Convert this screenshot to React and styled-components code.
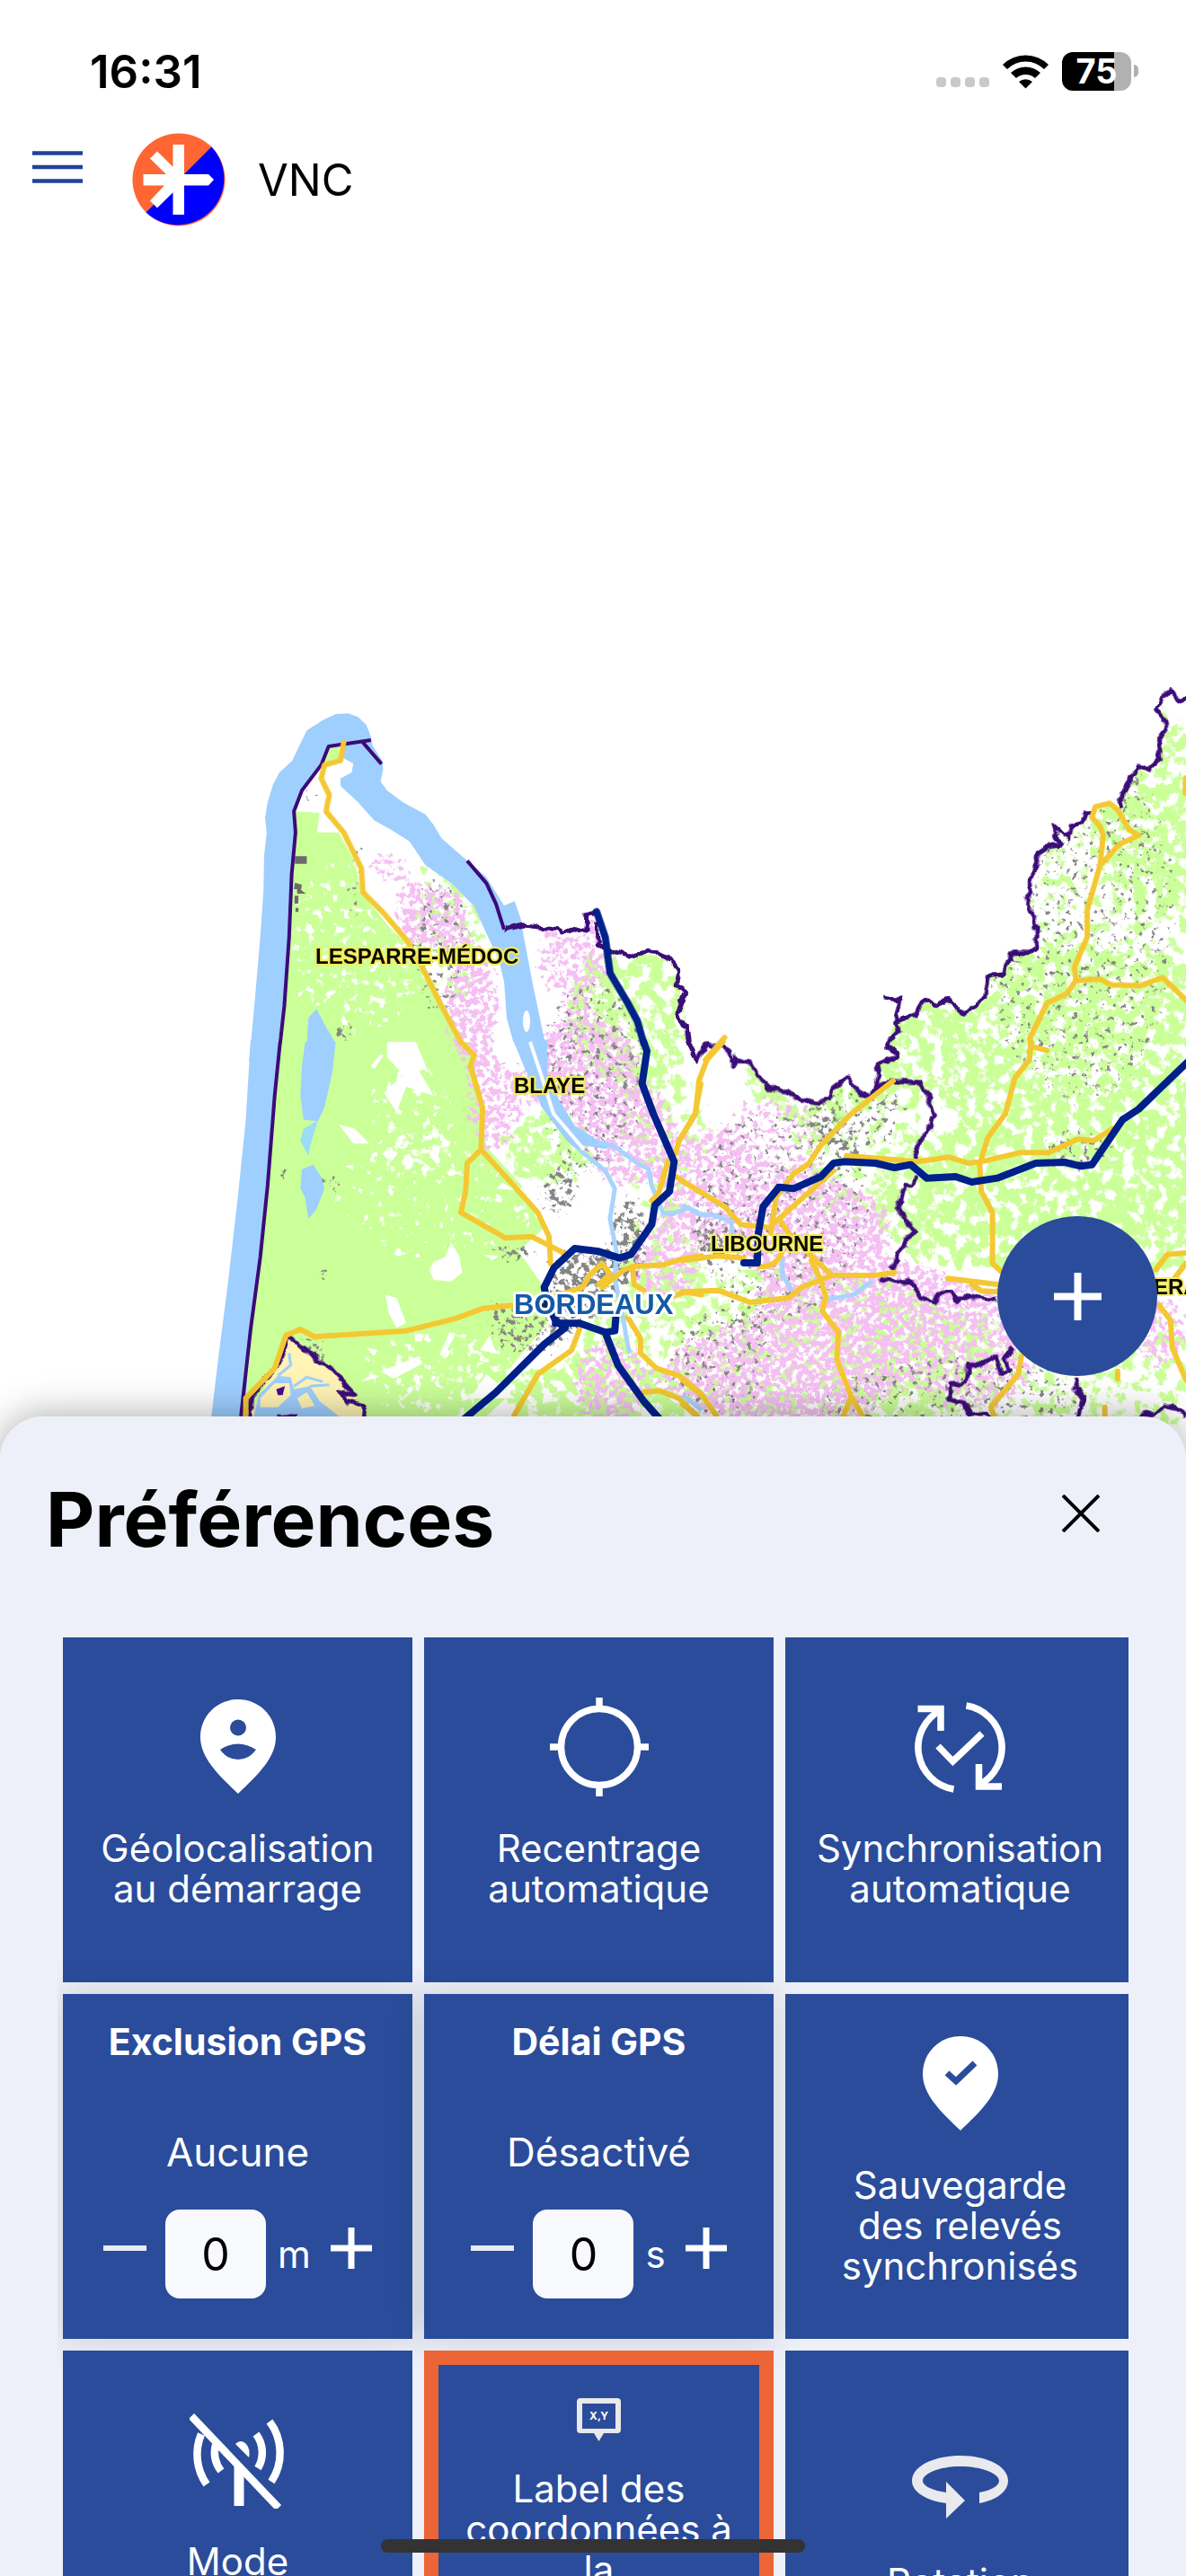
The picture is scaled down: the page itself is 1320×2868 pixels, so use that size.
import React, { useState } from 'react';
import styled, { createGlobalStyle } from 'styled-components';

const GlobalStyle = createGlobalStyle`
  * {
    box-sizing: border-box;
  }
  body {
    margin: 0;
    background: #fff;
    font-family: Inter, "Liberation Sans", sans-serif;
    color: #000;
  }
  button {
    border: none;
    padding: 0;
    background: none;
    font: inherit;
    color: inherit;
    cursor: pointer;
  }
  svg {
    display: block;
  }
`

const Screen = styled.div`
  position: relative;
  display: flex;
  flex-direction: column;
  height: 100vh;
  overflow: hidden;
`
const Upper = styled.div`
  display: flex;
  flex-direction: column;
  flex: none;
  height: 55vh;
`
const StatusBar = styled.div`
  display: flex;
  justify-content: space-between;
  align-items: center;
  flex: none;
  height: 138px;
  padding: 20px 53px 0 100px;
`
const Clock = styled.span`
  font-size: 51px;
  font-weight: 600;
`
const StatusIcons = styled.div`
  display: flex;
  align-items: center;
  gap: 15px;
`
const Signal = styled.div`
  display: flex;
  gap: 5px;
  padding-top: 24px;
`
const SignalDot = styled.span`
  width: 11px;
  height: 11px;
  border-radius: 4px;
  background: #c9c9c9;
`
const Battery = styled.div`
  display: flex;
  align-items: center;
  gap: 3px;
`
const BatteryBody = styled.div`
  width: 77px;
  height: 43px;
  border-radius: 12px;
  background: linear-gradient(to right, #000 75%, #b1b1b1 75%);
  color: #fff;
  font-size: 38px;
  font-weight: 700;
  line-height: 43px;
  text-align: center;
`
const BatteryTip = styled.span`
  width: 5px;
  height: 14px;
  border-radius: 0 6px 6px 0;
  background: #b1b1b1;
`
const AppBar = styled.header`
  display: flex;
  align-items: center;
  flex: none;
  height: 124px;
  padding: 0 36px;
`
const MenuButton = styled.button`
  align-self: flex-start;
  padding-top: 30px;
  margin-right: 55px;
`
const AppName = styled.span`
  margin-left: 36px;
  font-size: 49px;
`
const MapArea = styled.main`
  position: relative;
  flex: 1;
  min-height: 0;
  margin-bottom: -48px;
  overflow: hidden;
`
const MapSvg = styled.svg`
  width: 100%;
`
const MapLabel = styled.text`
  font-family: "Liberation Sans", Arial, sans-serif;
  font-weight: 700;
  font-size: ${props => (props.$city ? 31 : 24)}px;
  fill: ${props => (props.$city ? '#1459a8' : '#0a0a00')};
  stroke: ${props => (props.$city ? '#ffffff' : '#f4ec5c')};
  stroke-width: ${props => (props.$city ? 6 : 4)}px;
  stroke-linejoin: round;
  paint-order: stroke;
`
const AddButton = styled.button`
  position: absolute;
  right: 32px;
  bottom: 93px;
  display: flex;
  justify-content: center;
  align-items: center;
  width: 178px;
  height: 178px;
  border-radius: 50%;
  background: #2a4c9b;
`
const SheetShadow = styled.div`
  position: relative;
  display: flex;
  flex-direction: column;
  flex: 1;
  min-height: 0;
  border-radius: 48px 48px 0 0;
  box-shadow: 0 0 44px rgba(0, 0, 0, 0.35);
`
const Sheet = styled.section`
  flex: 1;
  min-height: 0;
  overflow: hidden;
  border-radius: 48px 48px 0 0;
  background: #edf0f8;
`
const SheetHeader = styled.div`
  display: flex;
  justify-content: space-between;
  align-items: center;
  padding: 65px 96px 0 51px;
`
const Title = styled.h1`
  margin: 0;
  font-size: 84px;
  line-height: 100px;
  font-weight: 700;
`
const CloseButton = styled.button`
  padding-bottom: 14px;
`
const TilesViewport = styled.div`
  margin: 0 64px;
  padding-top: 81px;
  overflow: hidden;
`
const Tiles = styled.div`
  display: grid;
  grid-template-columns: repeat(3, 1fr);
  grid-auto-rows: 384px;
  gap: 13px;
  margin: 0 -7px 0 6px;
`
const Tile = styled.button`
  display: flex;
  flex-direction: column;
  justify-content: center;
  align-items: center;
  gap: 30px;
  padding-bottom: 20px;
  border: ${props => (props.$active ? '16px solid #ec6537' : 'none')};
  background: #2a4c9b;
  color: #fff;
`
const TileIcon = styled.span`
  display: flex;
  justify-content: center;
  align-items: center;
  height: ${props => (props.$small ? 48 : 120)}px;
`
const TileLabel = styled.span`
  min-height: ${props => props.$lines * 45}px;
  font-size: 42px;
  line-height: 45px;
  text-align: center;
`
const NumberTile = styled.div`
  display: flex;
  flex-direction: column;
  align-items: center;
  padding-top: 29px;
  background: #2a4c9b;
  color: #fff;
  box-shadow: 0 0 40px rgba(0, 0, 0, 0.14);
`
const NumberTitle = styled.label`
  margin-bottom: 77px;
  font-size: 41px;
  line-height: 48px;
  font-weight: 700;
`
const NumberState = styled.span`
  margin-bottom: 41px;
  font-size: 44px;
  line-height: 45px;
`
const Stepper = styled.div`
  display: flex;
  align-items: center;
`
const StepButton = styled.button`
  padding-bottom: 14px;
`
const NumberInput = styled.input`
  width: 112px;
  height: 99px;
  margin: 0 13px 0 21px;
  padding: 0;
  border: none;
  border-radius: 16px;
  background: #f8f9fd;
  color: #000;
  font-family: inherit;
  font-size: 50px;
  text-align: center;
`
const Unit = styled.span`
  margin-right: 22px;
  font-size: 42px;
  line-height: 45px;
`
const HomeIndicator = styled.div`
  position: absolute;
  left: 50%;
  bottom: 26px;
  width: 472px;
  height: 15px;
  margin-left: -236px;
  border-radius: 8px;
  background: #333;
`

const WifiIcon = () => (
  <svg width="51" height="40" viewBox="0 0 51 40" aria-hidden="true">
    <path d="M0 13 A36 36 0 0 1 51 13 L46 18 A29 29 0 0 0 5 18 Z" />
    <path d="M9 22 A24 24 0 0 1 42 22 L36 28 A16 16 0 0 0 15 28 Z" />
    <path d="M18 32 A12 12 0 0 1 33 32 L25.500 39.500 Z" />
  </svg>
)

const MenuIcon = () => (
  <svg width="56" height="36" viewBox="0 0 56 36" aria-hidden="true">
    <path d="M0 2.500 H56 M0 18 H56 M0 33.500 H56" stroke="#1f4396" strokeWidth="4.500" />
  </svg>
)

const Logo = () => (
  <svg width="104" height="104" viewBox="0 0 104 104" role="img" aria-label="VNC">
    <circle cx="52" cy="52" r="51.500" fill="#ff6633" />
    <path d="M88.400 15.600 A51.500 51.500 0 0 1 15.600 88.400 Z" fill="#0000ff" />
    <g fill="#fff">
      <path d="M45.500 13 H58 V91 H45.500 Z" />
      <path d="M12.500 46 H85 L91 52 L85 58.500 H12.500 Z" />
      <path d="M28 20.500 L20 28.500 L43 51 L20 75.500 L28 83.500 L54 58 V46 Z" />
    </g>
  </svg>
)

const GeolocIcon = () => (
  <svg width="84" height="106" viewBox="0 0 84 106">
    <path d="M42 0 C19 0 0 18 0 42 C0 65 20 84 42 105 C64 84 84 65 84 42 C84 18 65 0 42 0 Z" fill="#fff" />
    <circle cx="42" cy="31.500" r="9" fill="#2a4c9b" />
    <path d="M22 56 Q42 43 62 56 Q54 67 42 67 Q30 67 22 56 Z" fill="#2a4c9b" />
  </svg>
)

const TargetIcon = () => (
  <svg width="110" height="110" viewBox="0 0 110 110" fill="none" stroke="#fff" strokeWidth="7.500">
    <circle cx="55" cy="55" r="42.500" />
    <path d="M55 0 V10 M55 100 V110 M0 55 H10 M100 55 H110" />
  </svg>
)

const SyncIcon = () => (
  <svg width="101" height="101" viewBox="0 0 101 101" fill="none" stroke="#fff" strokeWidth="7.500">
    <path d="M57.500 4 A47 47 0 0 1 72 92" />
    <path d="M71.500 69 V94 H97" />
    <path d="M43.500 97 A47 47 0 0 1 29 9" />
    <path d="M3.500 7.500 H29 V32" />
    <path d="M26 49 L42.500 66 L75 35" />
  </svg>
)

const PinCheckIcon = () => (
  <svg width="84" height="106" viewBox="0 0 84 106">
    <path d="M42 0 C19 0 0 18 0 42 C0 65 20 84 42 105 C64 84 84 65 84 42 C84 18 65 0 42 0 Z" fill="#fff" />
    <path d="M27 41 L37 50 L58 30" fill="none" stroke="#2a4c9b" strokeWidth="7" />
  </svg>
)

const AntennaOffIcon = () => (
  <svg width="108" height="108" viewBox="-1 -7 108 108" fill="none" stroke="#fff" strokeWidth="8.500">
    <path d="M88 4 A58 58 0 0 1 90 71" />
    <path d="M73 18 A34 34 0 0 1 75 56" />
    <path d="M12 18 A58 58 0 0 0 18 74" />
    <path d="M28 30 A34 34 0 0 0 34 59" />
    <path d="M50 29 Q56 23 62 29 Q67 35 65 44 Z" fill="#fff" stroke="none" />
    <path d="M54 54 V98" strokeWidth="11" />
    <path d="M1 -2 L98 100" />
  </svg>
)

const CoordsIcon = () => (
  <svg width="49" height="48" viewBox="0 0 49 48">
    <path d="M4 0 H45 Q49 0 49 4 V35 Q49 39 45 39 H30 L24.500 48 L19 39 H4 Q0 39 0 35 V4 Q0 0 4 0 Z M6 6 V34 H43 V6 Z" fill="#e9e9ea" fillRule="evenodd" />
    <text x="24.500" y="24" fontSize="12" fontWeight="700" fill="#fff" textAnchor="middle">X,Y</text>
  </svg>
)

const RotateIcon = () => (
  <svg width="107" height="84" viewBox="0 -14 107 84">
    <path d="M38 53 C15 50 0 40 0 28 C0 12 24 0 54 0 C84 0 107 12 107 28 C107 41 92 50 75 53 V41 C87 39 97 34 97 28 C97 20 78 12 54 12 C30 12 12 20 12 28 C12 34 24 39 38 41 V29 L59 50 L38 70 Z" fill="#e9eaee" />
  </svg>
)

const PlusIcon = ({ size, weight }) => (
  <svg width={size} height={size} viewBox={`0 0 ${size} ${size}`} aria-hidden="true">
    <path d={`M0 ${size / 2} H${size} M${size / 2} 0 V${size}`} stroke="#fff" strokeWidth={weight} />
  </svg>
)

const MinusIcon = () => (
  <svg width="48" height="48" viewBox="0 0 48 48" aria-hidden="true">
    <path d="M0 24 H48" stroke="#e9ecf5" strokeWidth="6" />
  </svg>
)

const CloseIcon = () => (
  <svg width="42" height="42" viewBox="0 0 42 42" aria-hidden="true">
    <path d="M1 1 L41 41 M41 1 L1 41" stroke="#000" strokeWidth="4" />
  </svg>
)

// The map is drawn as four sheets; each has its own origin, all share one scale.
const sheets = {
  nw: 'translate(220 760) scale(0.35714 0.33333)',
  ne: 'translate(760 740) scale(0.35714 0.33333)',
  sw: 'translate(220 1160) scale(0.35714 0.33333)',
  se: 'translate(760 1160) scale(0.35714 0.33333)',
}

const sea = {
  nw: 'M160 1265 L175 1100 L195 850 L205 700 L207 580 L215 500 L210 450 L218 400 L235 340 L255 300 L295 260 L315 215 L340 160 L390 125 L430 105 L470 103 L500 115 L525 140 L540 180 L545 210 L575 260 L578 290 L570 330 L590 360 L640 400 L710 440 L735 475 L760 520 L840 595 L900 650 L955 745 L988 730 L1010 800 L1025 850 L1045 1000 L1075 1130 L1095 1265 Z',
  sw: 'M165 -5 L150 260 L125 520 L95 800 L65 1050 L35 1320 H400 V-5 Z',
}

const land = {
  nw: 'M250 1205 L270 1080 L285 850 L293 640 L295 570 L305 500 L300 430 L325 360 L385 275 L405 215 L440 210 L455 200 L450 250 L485 270 L480 300 L445 320 L445 345 L500 400 L550 460 L600 490 L660 530 L710 610 L790 670 L860 745 L905 850 L940 930 L955 1000 L963 1120 L985 1205 Z M1083 1205 L1045 1010 L1020 870 L1010 812 L1130 830 L1210 825 L1215 770 L1240 765 L1250 880 L1345 915 L1410 893 L1480 930 L1500 960 L1490 1010 L1520 1030 L1495 1105 L1525 1160 L1535 1205 Z',
  ne: 'M1570 105 L1540 120 L1525 80 L1495 115 L1475 150 L1500 180 L1503 220 L1480 270 L1485 315 L1455 345 L1420 345 L1370 430 L1365 478 L1330 463 L1275 500 L1245 525 L1210 540 L1203 580 L1160 540 L1155 575 L1182 600 L1145 605 L1110 630 L1090 700 L1070 780 L1100 870 L1102 940 L1075 965 L1020 965 L995 1035 L950 1040 L940 1110 L880 1168 L820 1118 L780 1138 L755 1118 L720 1170 L660 1195 L632 1275 L632 1265 H1570 Z M-2 1100 L15 1215 L25 1265 H-2 Z M60 1265 H105 Z',
  sw: 'M255 0 L240 180 L218 480 L195 720 L165 960 L135 1450 H1515 V0 Z',
  se: 'M-5 0 L18 0 L40 65 L75 5 L120 15 L145 40 L155 80 L165 55 L210 70 L245 130 L270 155 L295 155 L350 185 L420 205 L455 190 L460 165 L510 122 L560 175 L590 180 L610 120 L605 75 L675 45 L630 10 V0 H1575 V1450 H-5 Z',
}

const forest = {
  nw: 'M250 1205 L270 1080 L285 850 L293 640 L295 570 L305 500 L300 430 L380 435 L372 500 L440 500 L490 600 L510 700 L600 820 L660 880 L720 1000 L800 1150 L830 1205 Z M405 215 L440 215 L440 255 L395 270 Z',
  sw: 'M255 0 L240 180 L218 480 L195 720 L165 960 L135 1450 H840 L980 1080 L1090 940 L1080 820 L1000 700 L1080 620 L1010 480 L900 350 L885 200 L850 0 Z',
}

const clearings = 'M440 275 L490 290 L535 340 L485 340 Z M590 0 L680 0 L715 90 L690 95 L735 180 L650 150 L620 235 L580 170 L640 110 L590 50 Z M735 735 L770 720 L790 670 L815 715 L825 770 L790 800 L735 795 L722 760 Z M585 845 L620 855 L650 940 L620 955 L595 905 Z M540 80 L570 40 L580 45 L550 90 Z M775 435 L800 425 L810 440 L785 450 Z M675 975 L700 975 L700 1000 L678 1000 Z M760 1030 L785 970 L805 975 L770 1045 Z M570 1100 L690 1050 L700 1075 L610 1125 Z M880 1030 L910 980 L930 1040 Z M525 1020 L560 1030 L550 1050 Z M890 710 L940 715 L920 730 Z M930 490 L950 470 L990 495 Z M460 415 L485 410 L485 430 Z M850 1190 L990 1190 L900 1110 Z M1000 1160 L1050 1190 L1040 1210 Z M900 1250 L960 1190 L990 1250 Z'

const water = {
  nw: 'M340 1205 L345 1120 L370 1090 L400 1150 L430 1205 Z',
  sw: 'M335 0 H430 L420 100 L395 220 L375 265 L330 260 L320 180 L325 80 Z M325 425 L360 410 L385 450 L395 490 L370 560 L345 590 L335 520 L320 490 Z M983 -5 H1090 L1090 110 L1130 200 L1175 280 L1250 330 L1300 340 L1270 358 L1200 345 L1215 390 L1150 330 L1070 215 L1055 170 L1020 90 Z',
}

const rivers = {
  sw: 'M1190 360 L1270 430 L1300 490 L1285 590 L1305 700 L1300 790 L1325 920 L1345 1040 M1250 335 L1300 350 L1370 405 L1405 425 L1415 480 L1450 570 L1475 575 L1530 555 L1560 570',
  se: 'M0 545 L50 575 L100 580 L150 600 L155 640 M310 720 L310 780 L340 830 M450 860 L530 845 L590 800 M0 1180 L60 1230',
}

const roads = {
  nw: 'M455 200 L445 260 L395 275 L385 320 L410 375 L400 430 L455 500 L510 620 L515 700 L580 770 L655 865 L700 950 L760 1080 L820 1200',
  ne: 'M1085 1265 L1080 1250 L1135 1130 L1195 1100 L1225 1055 L1220 1010 L1260 910 L1260 820 L1300 670 L1310 570 L1300 540 L1275 510 L1285 475 L1330 463 L1355 485 L1390 550 L1420 570 L1360 600 L1305 665 M1225 1055 L1300 1050 L1335 1070 L1425 1072 L1495 1045 L1568 1120 M1566 380 V430 M70 1320 L130 1245',
  sw: 'M820 0 L862 45 L850 80 L888 220 L883 360 L840 405 L835 500 L820 570 L960 655 L1040 650 L1150 710 M883 360 L960 450 L1060 570 L1095 650 L1100 740 M150 1250 V1190 L240 1090 L275 980 L320 960 L365 985 L650 965 L800 925 L890 890 L980 880 M1190 960 L1165 1030 L1060 1110 L985 1250 M1270 980 L1290 1040 M1340 920 L1380 990 L1380 1040 L1430 1090 L1500 1115 L1570 1175 M1390 1170 L1440 1165 L1500 1190 L1555 1250 M1260 820 L1330 760 L1360 750 L1450 745 L1510 725 L1570 715 M1110 850 L1200 820 L1220 780 L1260 740 L1285 775 L1250 810 M1355 750 L1360 810 L1390 830 M1480 850 L1520 835 L1570 845 M1568 140 L1550 240 L1500 330 L1490 370 M1465 400 L1435 510 L1415 530 M1490 450 L1570 505',
  se: 'M125 0 L75 60 L50 130 L40 240 L0 310 M655 130 L520 245 L430 345 L390 410 L345 440 L290 520 L275 640 M470 430 L300 590 L330 640 L420 735 L465 780 L600 780 L660 770 M0 465 L130 550 L180 610 L270 620 L300 590 M0 730 L110 715 L190 722 M310 700 Q290 755 240 750 M0 835 L110 830 L210 870 L330 855 L370 820 L465 780 M400 730 L430 795 L445 850 L435 900 L485 970 L480 1060 L525 1185 L500 1250 M525 1185 L560 1250 M0 1130 L60 1180 L105 1250 M0 1210 L45 1250 M510 380 L730 400 L830 385 L890 405 L930 400 L1050 370 L1140 370 L1230 325 L1280 330 L1340 290 M1085 0 L1080 60 L1035 120 L1005 240 L950 320 L925 410 L930 500 L965 570 L965 740 L990 765 M1085 15 L1135 28 M825 790 L980 810 M900 810 L930 832 L980 835 M1055 1050 L1045 1110 L960 1220 L970 1250 M1475 760 L1510 710 L1568 705 M1535 785 L1568 740 M1485 880 L1520 930 L1525 1020 L1568 1130 M1355 1100 V1125 M1315 1220 V1250',
}

const motorways = {
  nw: 'M1243 765 L1270 850 L1285 970 L1340 1070 L1370 1130 L1390 1205',
  sw: 'M1390 0 L1400 30 L1385 140 L1420 240 L1485 400 L1470 500 L1425 545 L1415 610 L1350 710 L1315 722 L1250 700 L1175 690 L1110 755 L1080 820 L1090 870 L1115 930 L1145 955 L1080 1010 L930 1170 L830 1260 M1115 940 L1190 940 L1270 970 L1300 965 L1303 920 M1270 970 L1310 1080 L1390 1200 L1440 1260',
  se: 'M190 738 L232 738 L235 640 L250 550 L300 485 L345 490 L430 450 L470 405 L500 400 L600 405 L660 420 L710 410 L760 455 L850 450 L900 468 L980 455 L1100 405 L1190 402 L1240 415 L1275 410 L1370 260 L1420 225 L1570 70',
}

const coast = {
  nw: 'M257 1205 L270 1080 L285 850 L293 640 L305 500 L300 430 L325 360 L385 275 L408 213 L540 192 M515 200 L573 272 M840 595 L900 670 L930 740 L955 825',
  sw: 'M257 0 L240 180 L218 480 L195 720 L165 960 L135 1250',
}

const borders = {
  nw: 'M955 825 L1020 810 L1130 825 L1135 840 L1180 820 L1212 828 L1215 772 L1243 765 M1245 800 L1250 880 L1345 915 L1410 893 L1480 930 L1500 960 L1490 1010 L1520 1030 L1495 1105 L1525 1160 L1530 1200 L1552 1265',
  ne: 'M625 1110 L675 1120 L660 1195 L720 1170 L755 1118 L780 1138 L820 1118 L880 1168 L940 1110 L950 1040 L995 1035 L1020 965 L1075 965 L1102 940 L1100 870 L1070 780 L1090 700 L1110 630 L1145 605 L1182 600 L1155 575 L1160 540 L1203 580 L1210 540 L1245 525 L1255 500 L1275 500 M1365 478 L1370 430 L1420 345 L1455 345 L1485 315 L1480 270 L1503 220 L1500 180 L1475 150 L1495 115 L1525 80 L1540 120 L1568 105 M665 1195 L670 1225 L632 1275 L675 1305',
  sw: 'M165 1250 V1190 L240 1090 L270 1030 L285 985 L350 1045 L410 1085 L490 1180 L440 1170 L460 1200 L510 1215 L525 1260 M250 1255 Q285 1245 310 1255',
  se: 'M18 0 L40 65 L75 5 L120 15 L145 40 L155 80 L165 55 L210 70 L245 130 L270 155 L295 155 L350 185 L420 205 L455 190 L460 165 L510 122 L560 175 L590 180 L620 140 L655 128 L735 135 L765 180 L785 250 L735 340 L720 400 M725 440 L715 480 L690 475 L670 555 L720 630 L670 710 L650 760 M590 180 L610 120 L605 75 L675 45 M610 787 L670 803 L705 797 L740 855 L785 870 L800 840 L835 835 L850 865 L880 850 L980 862 M1028 1015 L1005 1060 L1020 1100 L990 1105 L972 1045 L935 1080 L890 1075 L880 1140 L835 1140 V1195 L880 1210 L890 1245 L940 1240 L970 1260 M1230 1120 L1220 1155 L1248 1185 L1232 1260 M1425 1245 L1470 1240 L1500 1215 L1540 1225 L1568 1245',
}

// cx, cy, rx, ry, density
const meadows = [
  [1170, 1150, 250, 100, 1], [1210, 1320, 200, 120, 1], [1290, 900, 70, 120, 0.97],
  [1220, 1000, 170, 130, 0.84], [900, 1200, 80, 50, 1], [950, 1280, 90, 90, 0.85],
  [700, 1130, 80, 90, 0.97], [1060, 1340, 90, 80, 0.97], [860, 1510, 240, 110, 0.9],
  [1160, 1530, 220, 90, 0.88], [500, 1030, 50, 100, 0.88], [610, 1280, 60, 50, 1],
  [640, 1560, 120, 50, 1], [740, 1270, 60, 90, 0.86], [730, 1400, 60, 60, 0.85],
]
const vineyards = [
  [480, 1020, 50, 45, 1], [525, 1120, 38, 80, 1], [430, 965, 35, 25, 0.92], [550, 1230, 40, 60, 0.97],
  [650, 1190, 70, 70, 1], [700, 1260, 60, 70, 0.98], [640, 1065, 50, 60, 0.95], [900, 1370, 100, 70, 1],
  [790, 1320, 60, 70, 0.96], [960, 1450, 130, 60, 1], [870, 1530, 140, 70, 1], [680, 1540, 50, 60, 0.97],
  [740, 1400, 50, 60, 0.95], [860, 1270, 70, 60, 0.88], [1080, 1500, 90, 80, 0.95], [1290, 1480, 40, 50, 0.95],
]
const towns = [
  [645, 1430, 46, 50, 1], [645, 1430, 30, 34, 1], [570, 1395, 36, 18, 1], [700, 1380, 30, 60, 0.96], [590, 1480, 56, 40, 0.92],
  [345, 1500, 24, 22, 1], [372, 1540, 26, 26, 1], [545, 1450, 16, 12, 1], [315, 1308, 18, 16, 1],
  [368, 1318, 24, 16, 1], [345, 885, 14, 20, 1], [395, 980, 20, 60, 0.86], [490, 1050, 40, 90, 0.84],
  [660, 1200, 70, 120, 0.84], [870, 1350, 110, 130, 0.82], [1200, 1020, 120, 220, 0.82], [800, 1520, 70, 70, 0.83],
  [380, 1148, 24, 18, 1], [294, 1448, 6, 16, 1], [360, 1420, 16, 22, 1], [620, 1330, 30, 34, 0.95],
  [1060, 1560, 160, 60, 0.83], [790, 1385, 24, 28, 0.94], [960, 1240, 60, 50, 0.86], [1200, 1280, 50, 34, 0.88],
]
const glades = [
  [400, 1050, 90, 110, 0.84], [460, 1240, 60, 70, 0.82], [480, 1340, 120, 80, 0.78], [500, 1530, 110, 60, 0.86],
  [640, 1340, 60, 60, 0.9], [1100, 1190, 260, 60, 0.8],
]

const Layer = ({ paths, ...rest }) => (
  <g {...rest}>
    {Object.keys(paths).map(key => (
      <path key={key} d={paths[key]} transform={sheets[key]} vectorEffect="non-scaling-stroke" />
    ))}
  </g>
)

const Speckles = ({ blobs, filter }) => (
  <g filter={`url(#${filter})`}>
    {blobs.map(([cx, cy, rx, ry, density], i) => (
      <ellipse key={i} cx={cx} cy={cy} rx={rx} ry={ry} fillOpacity={density} />
    ))}
  </g>
)

const SpeckleFilter = ({ id, color, frequency, seed, level }) => (
  <filter id={id} filterUnits="userSpaceOnUse" x="0" y="700" width="1320" height="940" colorInterpolationFilters="sRGB">
    <feGaussianBlur in="SourceAlpha" stdDeviation="9" result="area" />
    <feTurbulence type="fractalNoise" baseFrequency={frequency} numOctaves="4" seed={seed} />
    <feColorMatrix values="0 0 0 0 0  0 0 0 0 0  0 0 0 0 0  1 0 0 0 0" result="noise" />
    <feComposite in="area" in2="noise" operator="arithmetic" k2="0.5" k3="0.5" />
    <feComponentTransfer result="dots">
      <feFuncA type="linear" slope="18" intercept={-18 * level} />
    </feComponentTransfer>
    <feFlood floodColor={color} />
    <feComposite in2="dots" operator="in" />
  </filter>
)

const RegionMap = () => (
  <MapSvg viewBox="0 262 1320 1364" role="img" aria-label="Carte">
    <defs>
      <SpeckleFilter id="green" color="#cbff98" frequency="0.08" seed="3" level={0.69} />
      <SpeckleFilter id="pink" color="#f5bff3" frequency="0.16" seed="8" level={0.705} />
      <SpeckleFilter id="grey" color="#858585" frequency="0.16" seed="21" level={0.725} />
      <SpeckleFilter id="white" color="#ffffff" frequency="0.1" seed="14" level={0.715} />
      <filter id="jagged" filterUnits="userSpaceOnUse" x="0" y="700" width="1320" height="940">
        <feTurbulence type="fractalNoise" baseFrequency="0.08" numOctaves="2" seed="5" />
        <feDisplacementMap in="SourceGraphic" scale="9" xChannelSelector="R" yChannelSelector="G" />
      </filter>
      <clipPath id="land">
        {Object.keys(land).map(key => <path key={key} d={land[key]} transform={sheets[key]} />)}
      </clipPath>
    </defs>
    <Layer paths={sea} fill="#9fcfff" />
    <Layer paths={land} fill="#fff" />
    <Layer paths={forest} fill="#cbff98" />
    <g clipPath="url(#land)">
      <Speckles blobs={meadows} filter="green" />
      <Speckles blobs={glades} filter="white" />
      <Speckles blobs={vineyards} filter="pink" />
      <Speckles blobs={towns} filter="grey" />
    </g>
    <g transform={sheets.sw}>
      <path d={clearings} fill="#fff" />
      <path d="M330 290 L375 262 L350 350 L345 380 L320 330 Z" fill="#9bdcf8" />
      <path d="M285 990 L350 1045 L410 1085 L490 1180 L520 1250 L525 1320 H160 L165 1240 L240 1090 L270 1030 Z" fill="#fff3b5" />
      <path d="M160 1320 L190 1180 L250 1115 L290 1120 L300 1160 L350 1150 L380 1200 L440 1250 V1320 Z" fill="#9fcfff" />
      <path d="M195 1190 L240 1140 L285 1140 L290 1180 L250 1220 L195 1220 Z M310 1190 L340 1170 L365 1215 L325 1225 Z M380 1170 L420 1180 L440 1220 L400 1190 Z" fill="#fff3b5" />
      <path d="M250 1115 L290 1080 L285 1040 M300 1150 L340 1120 L390 1135 M350 1150 L410 1145" fill="none" stroke="#9fcfff" strokeWidth="9" />
      <path d="M245 1160 L272 1150 L265 1180 L250 1180 Z" fill="#4a0a86" />
    </g>
    <g fill="#6b6b6b" transform={sheets.nw}>
      <path d="M303 580 H340 V605 H303 Z M303 668 L325 675 L322 692 L337 705 H310 V690 H300 Z M302 712 H314 V738 H302 Z M305 752 H314 V766 H305 Z" />
    </g>
    <Layer paths={water} fill="#9fcfff" />
    <Layer paths={rivers} fill="none" stroke="#a9d4ff" strokeWidth="5" />
    <path d="M590 1160 L602 1196 L616 1240 L650 1280" fill="none" stroke="#fff" strokeWidth="4" />
    <ellipse cx="586" cy="1137" rx="4" ry="12" fill="#fff" />
    <Layer paths={coast} fill="none" stroke="#3b0a78" strokeWidth="4" strokeLinejoin="round" />
    <Layer paths={borders} fill="none" stroke="#3b0a78" strokeWidth="5" strokeLinejoin="round" filter="url(#jagged)" />
    <Layer paths={roads} fill="none" stroke="#f4c832" strokeWidth="6" strokeLinejoin="round" strokeLinecap="round" />
    <Layer paths={motorways} fill="none" stroke="#00208a" strokeWidth="8" strokeLinejoin="round" strokeLinecap="round" />
    <MapLabel x="351" y="1073">LESPARRE-MÉDOC</MapLabel>
    <MapLabel x="572" y="1217">BLAYE</MapLabel>
    <MapLabel x="791" y="1393">LIBOURNE</MapLabel>
    <MapLabel x="1284" y="1441">ERA</MapLabel>
    <MapLabel x="572" y="1463" $city>BORDEAUX</MapLabel>
    <circle cx="606" cy="1453" r="3" fill="#0b2a5c" />
  </MapSvg>
)

const NumberPreference = ({ id, title, state, unit }) => {
  const [value, setValue] = useState(0);
  return (
    <NumberTile>
      <NumberTitle htmlFor={id}>{title}</NumberTitle>
      <NumberState>{state}</NumberState>
      <Stepper>
        <StepButton aria-label="Diminuer" onClick={() => setValue(Math.max(0, value - 1))}>
          <MinusIcon />
        </StepButton>
        <NumberInput
          id={id}
          inputMode="numeric"
          value={value}
          onChange={e => setValue(Number(e.target.value) || 0)}
        />
        <Unit>{unit}</Unit>
        <StepButton aria-label="Augmenter" onClick={() => setValue(value + 1)}>
          <PlusIcon size={46} weight={7} />
        </StepButton>
      </Stepper>
    </NumberTile>
  );
};

const Preference = ({ icon, lines, small, active, children }) => (
  <Tile $active={active}>
    <TileIcon $small={small}>{icon}</TileIcon>
    <TileLabel $lines={lines}>{children}</TileLabel>
  </Tile>
)

const App = () => {
  return (
    <Screen>
      <GlobalStyle />
      <Upper>
        <StatusBar>
          <Clock>16:31</Clock>
          <StatusIcons>
            <Signal>
              <SignalDot />
              <SignalDot />
              <SignalDot />
              <SignalDot />
            </Signal>
            <WifiIcon />
            <Battery>
              <BatteryBody>75</BatteryBody>
              <BatteryTip />
            </Battery>
          </StatusIcons>
        </StatusBar>
        <AppBar>
          <MenuButton aria-label="Menu"><MenuIcon /></MenuButton>
          <Logo />
          <AppName>VNC</AppName>
        </AppBar>
        <MapArea>
          <RegionMap />
          <AddButton aria-label="Ajouter"><PlusIcon size={53} weight={8} /></AddButton>
        </MapArea>
      </Upper>
      <SheetShadow>
        <Sheet>
          <SheetHeader>
            <Title>Préférences</Title>
            <CloseButton aria-label="Fermer"><CloseIcon /></CloseButton>
          </SheetHeader>
          <TilesViewport>
            <Tiles>
              <Preference icon={<GeolocIcon />} lines={2}>Géolocalisation<br />au démarrage</Preference>
              <Preference icon={<TargetIcon />} lines={2}>Recentrage<br />automatique</Preference>
              <Preference icon={<SyncIcon />} lines={2}>Synchronisation<br />automatique</Preference>
              <NumberPreference id="exclusion" title="Exclusion GPS" state="Aucune" unit="m" />
              <NumberPreference id="delai" title="Délai GPS" state="Désactivé" unit="s" />
              <Preference icon={<PinCheckIcon />} lines={3}>Sauvegarde<br />des relevés<br />synchronisés</Preference>
              <Preference icon={<AntennaOffIcon />} lines={2}>Mode</Preference>
              <Preference icon={<CoordsIcon />} lines={4} small active>Label des<br />coordonnées à<br />la</Preference>
              <Preference icon={<RotateIcon />} lines={1}>Rotation</Preference>
            </Tiles>
          </TilesViewport>
        </Sheet>
      </SheetShadow>
      <HomeIndicator />
    </Screen>
  );
};

export default App;
